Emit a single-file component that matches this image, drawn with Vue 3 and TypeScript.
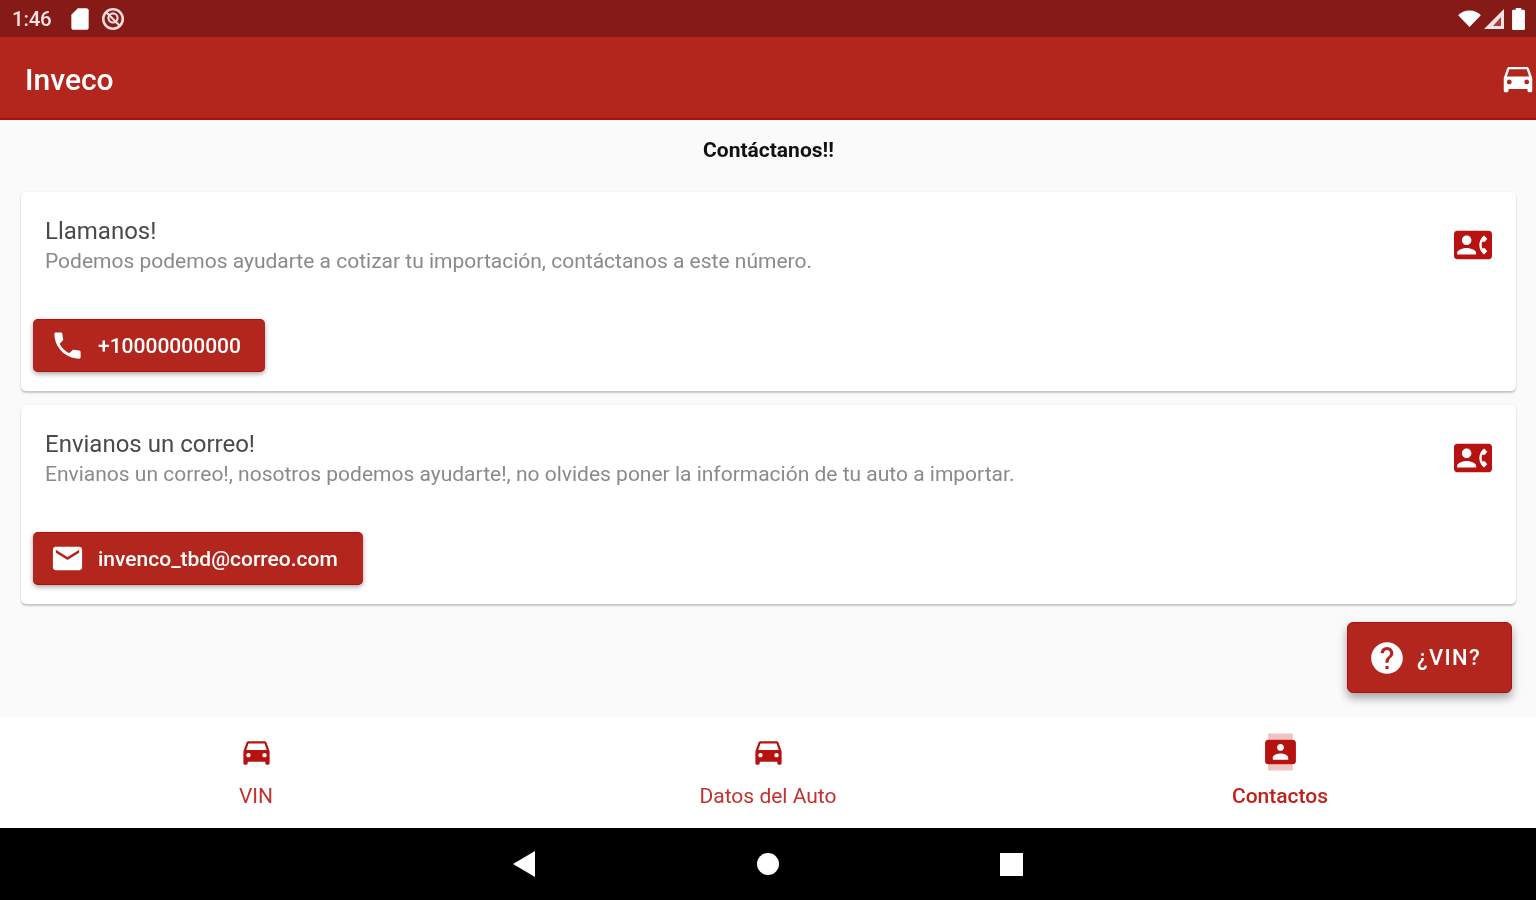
<template>
  <div class="screen">
    <div class="status-bar">
      <div class="status-left">
        <span class="clock">1:46</span>
        <svg class="st-icon" viewBox="0 0 24 24"><path d="M18 2h-8L4 8v12c0 1.100.9 2 2 2h12c1.100 0 2-.9 2-2V4c0-1.100-.9-2-2-2z" /></svg>
        <svg class="st-icon" viewBox="0 0 24 24">
          <circle cx="12" cy="12" r="9" fill="none" stroke="#f3dcdc" stroke-width="2.4" />
          <circle cx="12" cy="11" r="4.2" fill="none" stroke="#f3dcdc" stroke-width="2" />
          <path d="M6 6l12 12" stroke="#f3dcdc" stroke-width="2" />
        </svg>
      </div>
      <div class="status-right">
        <svg class="wifi" viewBox="0 0 24 18"><path d="M12 18L0 5.500C3 2.500 7.200.5 12 .5s9 2 12 5z" /></svg>
        <svg class="signal" viewBox="0 0 20 20"><path d="M20 0v20H0z" fill="#f5e4e3" /><path d="M17 8v9H9z" fill="#a5403c" /></svg>
        <svg class="battery" viewBox="0 0 14 24"><path d="M4 0h6v2h2.500c.8 0 1.500.7 1.500 1.500V22.500c0 .8-.7 1.500-1.500 1.500h-11C.7 24 0 23.300 0 22.500V3.500C0 2.700.7 2 1.500 2H4z" /></svg>
      </div>
    </div>

    <header class="app-bar">
      <span class="app-title">Inveco</span>
      <svg class="bar-car" viewBox="0 0 24 24"><path :d="carPath" /></svg>
    </header>

    <main class="content">
      <h1 class="heading">Contáctanos!!</h1>

      <section v-for="card in cards" :key="card.title" class="card">
        <div class="card-top">
          <div class="card-text">
            <div class="card-title">{{ card.title }}</div>
            <div class="card-sub">{{ card.text }}</div>
          </div>
          <svg class="card-icon" viewBox="0 0 24 24"><path :d="contactPhonePath" /></svg>
        </div>
        <button class="action" :class="card.kind">
          <svg v-if="card.kind === 'phone'" class="action-icon" viewBox="0 0 24 24"><path :d="phonePath" /></svg>
          <svg v-else class="action-icon" viewBox="0 0 24 24"><path :d="mailPath" /></svg>
          <span>{{ card.action }}</span>
        </button>
      </section>

      <div class="fab-row">
        <button class="fab">
          <svg class="fab-icon" viewBox="0 0 24 24"><path :d="helpPath" /></svg>
          <span>¿VIN?</span>
        </button>
      </div>
    </main>

    <nav class="bottom-nav">
      <div v-for="tab in tabs" :key="tab.label" class="tab" :class="{ active: tab.active }">
        <span class="tab-icon-wrap">
          <svg v-if="tab.active" class="tab-icon" viewBox="0 0 24 24">
            <path class="faint" d="M20 0H4v4h16V0zM4 24h16v-4H4v4z" />
            <path :d="contactsPath" />
          </svg>
          <svg v-else class="tab-icon" viewBox="0 0 24 24"><path :d="carPath" /></svg>
        </span>
        <span class="tab-label">{{ tab.label }}</span>
      </div>
    </nav>

    <div class="system-nav">
      <svg class="sys back" viewBox="0 0 22 26"><path d="M22 0v26L0 13z" /></svg>
      <span class="sys home"></span>
      <span class="sys recent"></span>
    </div>
  </div>
</template>

<script setup lang="ts">
interface Card { title: string; text: string; action: string; kind: 'phone' | 'mail' }
interface Tab { label: string; active?: boolean }

const carPath = 'M18.92 6.010C18.720 5.420 18.160 5 17.500 5h-11c-.66 0-1.210.42-1.420 1.010L3 12v8c0 .55.45 1 1 1h1c.55 0 1-.45 1-1v-1h12v1c0 .55.45 1 1 1h1c.55 0 1-.45 1-1v-8l-2.080-5.990zM6.500 16c-.83 0-1.500-.67-1.500-1.500S5.670 13 6.500 13s1.500.67 1.500 1.500S7.330 16 6.500 16zm11 0c-.83 0-1.500-.67-1.500-1.500s.67-1.500 1.500-1.500 1.500.67 1.500 1.500-.67 1.500-1.500 1.500zM5 11l1.500-4.500h11L19 11H5z'
const contactPhonePath = 'M22 3H2C.9 3 0 3.900 0 5v14c0 1.100.9 2 2 2h20c1.100 0 1.990-.9 1.990-2L24 5c0-1.100-.9-2-2-2zM8 6c1.660 0 3 1.340 3 3s-1.340 3-3 3-3-1.340-3-3 1.340-3 3-3zm6 12H2v-1c0-2 4-3.100 6-3.100s6 1.100 6 3.100v1zm3.850-4h1.640L21 16l-1.990 1.990c-1.310-.98-2.280-2.380-2.730-3.990-.18-.64-.28-1.310-.28-2s.1-1.360.28-2c.45-1.620 1.420-3.010 2.730-3.990L21 8l-1.510 2h-1.640c-.22.63-.35 1.300-.35 2s.13 1.370.35 2z'
const phonePath = 'M6.620 10.790c1.440 2.830 3.760 5.140 6.590 6.590l2.200-2.200c.27-.27.67-.36 1.020-.24 1.120.37 2.330.57 3.570.57.55 0 1 .45 1 1V20c0 .55-.45 1-1 1-9.390 0-17-7.610-17-17 0-.55.45-1 1-1h3.500c.55 0 1 .45 1 1 0 1.250.2 2.450.57 3.570.11.35.03.74-.25 1.020l-2.200 2.200z'
const mailPath = 'M20 4H4c-1.100 0-1.990.9-1.990 2L2 18c0 1.100.9 2 2 2h16c1.100 0 2-.9 2-2V6c0-1.100-.9-2-2-2zm0 4l-8 5-8-5V6l8 5 8-5v2z'
const helpPath = 'M12 2C6.480 2 2 6.480 2 12s4.480 10 10 10 10-4.480 10-10S17.520 2 12 2zm1 17h-2v-2h2v2zm2.070-7.750l-.9.920C13.450 12.900 13 13.500 13 15h-2v-.5c0-1.100.45-2.100 1.170-2.830l1.240-1.260c.37-.36.59-.86.59-1.410 0-1.100-.9-2-2-2s-2 .9-2 2H8c0-2.210 1.790-4 4-4s4 1.790 4 4c0 .88-.36 1.680-.93 2.250z'
const contactsPath = 'M20 4H4c-1.100 0-2 .9-2 2v12c0 1.100.9 2 2 2h16c1.100 0 2-.9 2-2V6c0-1.100-.9-2-2-2zm-8 2.750c1.240 0 2.250 1.010 2.250 2.250s-1.010 2.250-2.250 2.250S9.750 10.240 9.750 9 10.760 6.750 12 6.750zM17 17H7v-1.500c0-1.670 3.330-2.500 5-2.500s5 .83 5 2.500V17z'

const cards: Card[] = [
  {
    title: 'Llamanos!',
    text: 'Podemos podemos ayudarte a cotizar tu importación, contáctanos a este número.',
    action: '+10000000000',
    kind: 'phone',
  },
  {
    title: 'Envianos un correo!',
    text: 'Envianos un correo!, nosotros podemos ayudarte!, no olvides poner la información de tu auto a importar.',
    action: 'invenco_tbd@correo.com',
    kind: 'mail',
  },
]

const tabs: Tab[] = [
  { label: 'VIN' },
  { label: 'Datos del Auto' },
  { label: 'Contactos', active: true },
]
</script>

<style>
html, body { margin: 0; background: #fafafa; overflow: hidden; }
</style>

<style scoped>
.screen {
  width: 1536px; height: 900px; display: flex; flex-direction: column;
  font-family: Roboto, "Liberation Sans", sans-serif; background: #fafafa; overflow: hidden;
  filter: blur(.6px);
}
.status-bar {
  height: 37px; flex-shrink: 0; background: #851a17; color: #f5e4e3;
  display: flex; justify-content: space-between; align-items: center; padding: 0 11px 0 12px;
}
.status-left, .status-right { display: flex; align-items: center; }
.clock { font-size: 20.500px; font-weight: 500; width: 55px; letter-spacing: -.2px; }
.st-icon { width: 26px; height: 26px; fill: #fff; margin-right: 7px; }
.wifi { width: 23px; height: 17px; fill: #fff; margin-right: 3px; }
.signal { width: 20px; height: 20px; margin-right: 8px; }
.battery { width: 13px; height: 22px; fill: #fff; }

.app-bar {
  height: 83px; flex-shrink: 0; background: #b3261e; color: #fff;
  display: flex; justify-content: space-between; align-items: center; padding: 0 0 0 25px;
  border-bottom: 2px solid #b00f0a; box-sizing: border-box;
}
.app-title { font-size: 30px; font-weight: 500; padding-top: 4px; }
.bar-car { width: 38px; height: 38px; fill: #fff; margin-right: -1px; }

.content { flex: 1; display: flex; flex-direction: column; padding: 0 20px 0 21px; min-height: 0; }
.heading { margin: 17px 0 29px; height: 26px; line-height: 26px; text-align: center; font-size: 21px; font-weight: 700; color: #111; }

.card {
  height: 199px; box-sizing: border-box; background: #fff; border-radius: 5px; margin-bottom: 14px;
  box-shadow: 0 2px 2px rgba(0, 0, 0, .2), 0 0 2px rgba(0, 0, 0, .08);
  padding: 24px 24px 19px 12px; display: flex; flex-direction: column; justify-content: space-between; align-items: flex-start;
}
.card-top { align-self: stretch; display: flex; justify-content: space-between; align-items: center; padding-left: 12px; }
.card-title { font-size: 24px; line-height: 30px; color: #4a4a4a; }
.card-sub { font-size: 21px; line-height: 31px; color: #8a8a8a; }
.card-icon { width: 38px; height: 38px; fill: #b71210; margin-top: -4px; }

.action {
  height: 53px; border: 0; border-radius: 5px; background: #b3261e; color: #fff;
  display: flex; align-items: center; font: 500 21px Roboto, "Liberation Sans", sans-serif; padding: 0 24px 0 17px; gap: 13px;
  box-shadow: 0 2px 5px rgba(0, 0, 0, .35); border-top: 1px solid #b00f0a; border-bottom: 1px solid #b00f0a;
}
.action-icon { width: 35px; height: 35px; fill: #fff; }
.action.mail { padding-right: 25px; }

.fab-row { display: flex; justify-content: flex-end; margin-top: 4px; padding-right: 4px; }
.fab {
  width: 165px; height: 71px; border-radius: 6px; background: #b3261e; color: #fff;
  display: flex; align-items: center; gap: 11px; padding: 0 0 0 20px;
  font: 500 22px Roboto, "Liberation Sans", sans-serif; letter-spacing: 1.300px;
  box-shadow: 0 5px 10px rgba(0, 0, 0, .35); border: 1px solid #b00f0a; box-sizing: border-box;
}
.fab-icon { width: 38px; height: 38px; fill: #fff; }

.bottom-nav { height: 111px; flex-shrink: 0; background: #fff; display: grid; grid-template-columns: repeat(3, 1fr); }
.tab { display: flex; flex-direction: column; align-items: center; padding-top: 15px; color: #c2322c; }
.tab-icon-wrap { height: 38px; display: flex; align-items: center; justify-content: center; }
.tab-icon { width: 35px; height: 35px; fill: #b71210; }
.tab-label { margin-top: 13px; font-size: 21px; line-height: 26px; }
.tab.active .tab-label { font-weight: 500; color: #c0201c; }
.tab.active .tab-icon { width: 37px; height: 38px; margin-top: 2px; }
.faint { opacity: .25; }

.system-nav {
  height: 72px; flex-shrink: 0; background: #000;
  display: grid; grid-template-columns: 22px 22px 23px; justify-content: center; column-gap: 222px; align-items: center;
}
.sys { display: block; }
.back { width: 22px; height: 26px; fill: #fff; }
.home { width: 22px; height: 22px; border-radius: 50%; background: #fff; }
.recent { width: 23px; height: 23px; background: #fff; margin-left: -1px; }
</style>
